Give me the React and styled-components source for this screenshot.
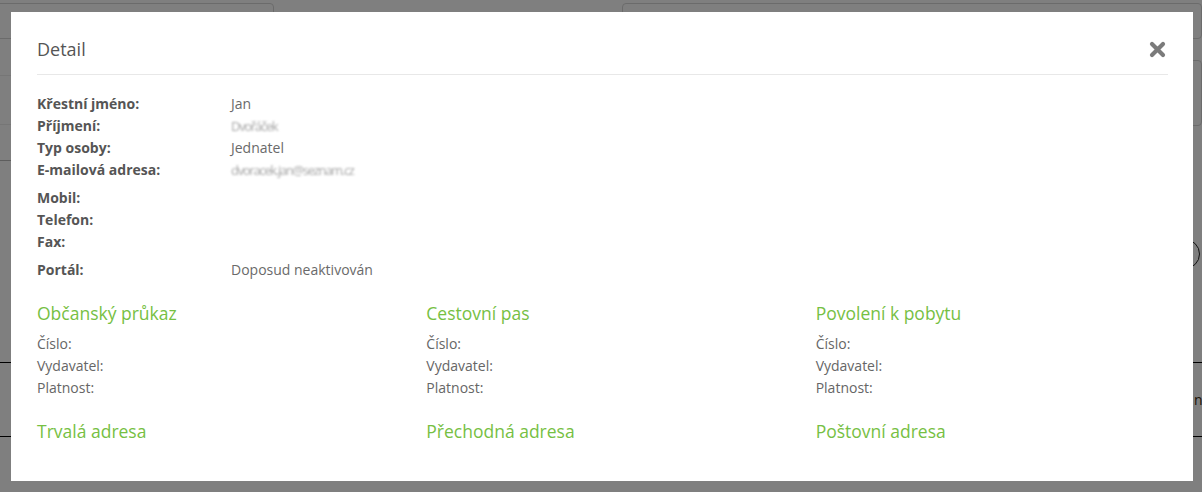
import React from 'react';
import styled, { createGlobalStyle } from 'styled-components';

const GlobalStyle = createGlobalStyle`
    html, body {
        margin: 0;
        padding: 0;
        background: #fff;
        font-family: "Open Sans", "DejaVu Sans", sans-serif;
        overflow: hidden;
    }
`

/* page behind the dialog */

const Page = styled.div`
    width: 1202px;
    height: 492px;
    padding-top: 3px;
    box-sizing: border-box;
    overflow: hidden;
`

const FilterRow = styled.div`
    display: flex;
    justify-content: space-between;
    margin-left: -4px;
`

const Input = styled.div`
    width: ${p => p.width}px;
    height: 36px;
    box-sizing: border-box;
    border: 1px solid #d6d6d6;
    border-radius: 4px;
    background: #fff;
`

const SecondRow = styled.div`
    display: flex;
    justify-content: space-between;
    margin-top: 21px;
`

const ListRows = styled.div`
    width: 600px;
    margin-top: -21px;
`

const ListRow = styled.div`
    height: ${p => p.height}px;
    border-bottom: 1px solid ${p => p.dark ? '#bbb' : '#ececec'};
`

const TextArea = styled.div`
    width: 580px;
    height: 66px;
    box-sizing: border-box;
    border: 1px solid #d6d6d6;
    border-radius: 4px;
`

const RoundButtonRow = styled.div`
    display: flex;
    justify-content: flex-end;
    margin-top: 78px;
    padding-right: 2px;
`

const RoundButton = styled.div`
    width: 28px;
    height: 28px;
    border: 1px solid #222;
    border-radius: 50%;
`

const Table = styled.div`
    margin-top: 55px;
`

const TableHead = styled.div`
    display: flex;
    justify-content: space-between;
    height: 34px;
    padding-top: 4px;
    border-bottom: 1px solid #000;
    font-weight: 700;
    font-size: 14px;
    color: #222;
`

const TableRow = styled.div`
    display: flex;
    justify-content: flex-end;
    height: 73px;
    border-bottom: 1px solid #000;
    align-items: center;
    font-size: 14px;
    color: #3a2a10;
`

/* dialog */

const Overlay = styled.div`
    position: fixed;
    inset: 0;
    background: rgba(0, 0, 0, 0.5);
`

const Modal = styled.div`
    position: fixed;
    left: 11px;
    top: 12px;
    width: 1182px;
    height: 469px;
    background: #fff;
    padding: 0 25px 0 26px;
    box-sizing: border-box;
    overflow: hidden;
`

const Header = styled.div`
    display: flex;
    justify-content: space-between;
    align-items: center;
    padding: 24px 0 12px;
    border-bottom: 1px solid #e8e8e8;
`

const Title = styled.h4`
    margin: 0;
    font-size: 18px;
    line-height: 26px;
    font-weight: 400;
    color: #555;
`

const Close = styled.button`
    border: 0;
    background: none;
    padding: 0;
    margin-right: 2px;
    width: 17px;
    height: 17px;
    cursor: pointer;
    display: flex;
`

const Body = styled.div`
    padding-top: 18px;
`

const Group = styled.div`
    margin-bottom: 6px;
`

const Row = styled.div`
    display: grid;
    grid-template-columns: 194px 1fr;
    font-size: 14px;
    line-height: 22px;
`

const Label = styled.span`
    font-weight: 700;
    color: #555;
`

const Value = styled.span`
    color: #6a6a6a;
    ${p => p.$masked && `
        color: #a8a8a8;
        filter: blur(1px);
        font-size: 13px;
        letter-spacing: -1.3px;
    `}
`

const Sections = styled.div`
    display: grid;
    grid-template-columns: repeat(3, 1fr);
    column-gap: 37px;
    row-gap: 19px;
    margin-top: 19px;
`

const Section = styled.div``

const SectionTitle = styled.h3`
    margin: 0 0 7px;
    font-size: 17.5px;
    line-height: 26px;
    font-weight: 400;
    color: #76c043;
`

const Item = styled.div`
    font-size: 14px;
    line-height: 22px;
    color: #666;
`

function CloseIcon() {
    return (
        <svg width="17" height="17" viewBox="0 0 17 17">
            <path d="M3 3 L14 14 M14 3 L3 14" stroke="#7b7b7b" strokeWidth="4.2" strokeLinecap="round" />
        </svg>
    )
}

const documents = ['Občanský průkaz', 'Cestovní pas', 'Povolení k pobytu']
const addresses = ['Trvalá adresa', 'Přechodná adresa', 'Poštovní adresa']

function App() {
    return (
        <>
            <GlobalStyle />
            <Page>
                <FilterRow>
                    <Input width={278} />
                    <Input width={580} />
                </FilterRow>
                <SecondRow>
                    <ListRows>
                        <ListRow height={36} />
                        <ListRow height={48} />
                        <ListRow height={35} dark />
                    </ListRows>
                    <TextArea />
                </SecondRow>
                <RoundButtonRow>
                    <RoundButton />
                </RoundButtonRow>
                <Table>
                    <TableHead>
                        <span style={{ marginLeft: '-42px' }}>Jméni</span>
                        <span />
                    </TableHead>
                    <TableRow>
                        <span style={{ marginRight: '-40px', width: '48px' }}>nic</span>
                    </TableRow>
                </Table>
            </Page>

            <Overlay />
            <Modal>
                <Header>
                    <Title>Detail</Title>
                    <Close aria-label="Zavřít"><CloseIcon /></Close>
                </Header>
                <Body>
                    <Group>
                        <Row><Label>Křestní jméno:</Label><Value>Jan</Value></Row>
                        <Row><Label>Příjmení:</Label><Value $masked>Dvořáček</Value></Row>
                        <Row><Label>Typ osoby:</Label><Value>Jednatel</Value></Row>
                        <Row><Label>E-mailová adresa:</Label><Value $masked>dvoracek.jan@seznam.cz</Value></Row>
                    </Group>
                    <Group>
                        <Row><Label>Mobil:</Label><Value /></Row>
                        <Row><Label>Telefon:</Label><Value /></Row>
                        <Row><Label>Fax:</Label><Value /></Row>
                    </Group>
                    <Group>
                        <Row><Label>Portál:</Label><Value>Doposud neaktivován</Value></Row>
                    </Group>

                    <Sections>
                        {documents.map(name => (
                            <Section key={name}>
                                <SectionTitle>{name}</SectionTitle>
                                <Item>Číslo:</Item>
                                <Item>Vydavatel:</Item>
                                <Item>Platnost:</Item>
                            </Section>
                        ))}
                        {addresses.map(name => (
                            <Section key={name}>
                                <SectionTitle>{name}</SectionTitle>
                            </Section>
                        ))}
                    </Sections>
                </Body>
            </Modal>
        </>
    )
}

export default App
